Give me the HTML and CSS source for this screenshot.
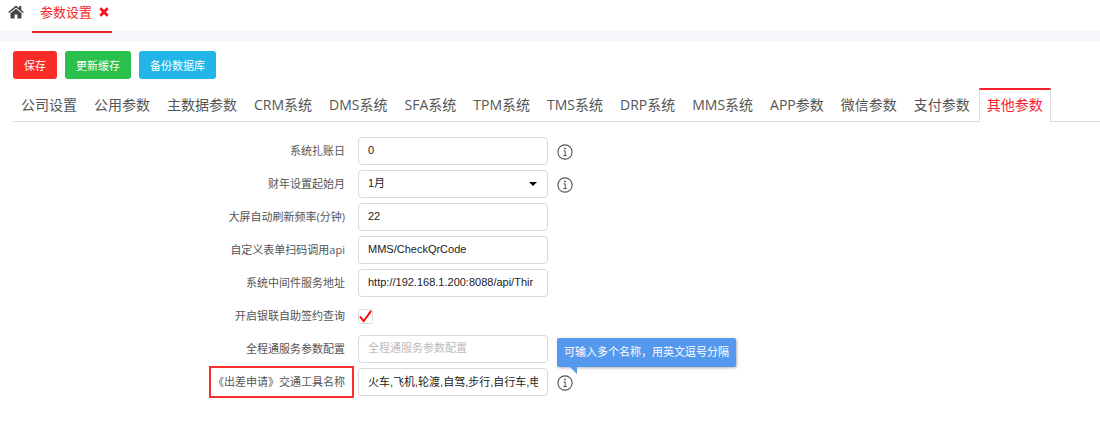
FILE: index.html
```html
<!DOCTYPE html>
<html lang="zh-CN">
<head>
    <meta charset="UTF-8">
    <meta name="viewport" content="width=device-width, initial-scale=1.0">
    <title>参数设置</title>
    <link rel="stylesheet" href="styles.css">
</head>
<body>
    <svg class="sprite" aria-hidden="true">
        <symbol id="icon-info" viewBox="0 0 16 16">
            <circle cx="8" cy="8" r="7.1" fill="none" stroke="currentColor" stroke-width="1.1"/>
            <circle cx="8" cy="4.5" r="0.9" fill="currentColor"/>
            <path d="M6.5 6.9h1.7v4.6M6.3 11.6h3.6" fill="none" stroke="currentColor" stroke-width="1"/>
        </symbol>
    </svg>

    <header class="page-tabs">
        <a href="#" class="home-link" aria-label="首页">
            <svg width="16" height="14" viewBox="0 0 16 14" fill="currentColor">
                <path d="M8 0.5L0.2 7l1 1.1L8 2.5l6.8 5.6 1-1.1-2.5-2.1V1.1h-2.2v2z"/>
                <path d="M8 3.7L2.5 8.2v5.3h4.1V9.4h2.8v4.1h4.1V8.2z"/>
            </svg>
        </a>
        <div class="page-tab">
            <a href="#">参数设置</a>
            <button type="button" class="close-btn" aria-label="关闭">
                <svg width="10" height="10" viewBox="0 0 10 10">
                    <path d="M1.3 1.3l7.4 7.4M8.7 1.3L1.3 8.7" stroke="currentColor" stroke-width="2.8"/>
                </svg>
            </button>
        </div>
    </header>

    <main class="content">
        <div class="toolbar">
            <button type="button" class="btn btn-save">保存</button>
            <button type="button" class="btn btn-refresh">更新缓存</button>
            <button type="button" class="btn btn-backup">备份数据库</button>
        </div>

        <nav class="tabs">
            <a href="#" class="tab">公司设置</a>
            <a href="#" class="tab">公用参数</a>
            <a href="#" class="tab">主数据参数</a>
            <a href="#" class="tab">CRM系统</a>
            <a href="#" class="tab">DMS系统</a>
            <a href="#" class="tab">SFA系统</a>
            <a href="#" class="tab">TPM系统</a>
            <a href="#" class="tab">TMS系统</a>
            <a href="#" class="tab">DRP系统</a>
            <a href="#" class="tab">MMS系统</a>
            <a href="#" class="tab">APP参数</a>
            <a href="#" class="tab">微信参数</a>
            <a href="#" class="tab">支付参数</a>
            <a href="#" class="tab active">其他参数</a>
        </nav>

        <form class="settings">
            <div class="row">
                <div class="label-cell"><label for="closingDay">系统扎账日</label></div>
                <input type="text" id="closingDay" class="control" value="0">
                <span class="info"><svg class="info-icon"><use href="#icon-info"/></svg></span>
            </div>
            <div class="row">
                <div class="label-cell"><label for="startMonth">财年设置起始月</label></div>
                <select id="startMonth" class="control">
                    <option>1月</option>
                </select>
                <span class="info"><svg class="info-icon"><use href="#icon-info"/></svg></span>
            </div>
            <div class="row">
                <div class="label-cell"><label for="refreshRate">大屏自动刷新频率(分钟)</label></div>
                <input type="text" id="refreshRate" class="control" value="22">
            </div>
            <div class="row">
                <div class="label-cell"><label for="scanApi">自定义表单扫码调用api</label></div>
                <input type="text" id="scanApi" class="control" value="MMS/CheckQrCode">
            </div>
            <div class="row">
                <div class="label-cell"><label for="serviceUrl">系统中间件服务地址</label></div>
                <input type="text" id="serviceUrl" class="control" value="http://192.168.1.200:8088/api/Thir">
            </div>
            <div class="row">
                <div class="label-cell"><label for="unionPay">开启银联自助签约查询</label></div>
                <span class="check">
                    <input type="checkbox" id="unionPay" checked>
                    <svg class="check-mark" viewBox="0 0 16 16">
                        <path d="M2 8l4 5L14 2" fill="none" stroke="currentColor" stroke-width="2"/>
                    </svg>
                </span>
            </div>
            <div class="row">
                <div class="label-cell"><label for="trackConfig">全程通服务参数配置</label></div>
                <input type="text" id="trackConfig" class="control" placeholder="全程通服务参数配置">
            </div>
            <div class="row">
                <div class="label-cell highlight"><label for="vehicles">《出差申请》交通工具名称</label></div>
                <input type="text" id="vehicles" class="control" value="火车,飞机,轮渡,自驾,步行,自行车,电动车">
                <span class="info">
                    <svg class="info-icon"><use href="#icon-info"/></svg>
                    <span class="tooltip" role="tooltip">可输入多个名称，用英文逗号分隔</span>
                </span>
            </div>
        </form>
    </main>
</body>
</html>
```
FILE: styles.css
```css
* {
    margin: 0;
    padding: 0;
    box-sizing: border-box;
}

body {
    font-family: "Open Sans", "Noto Sans CJK SC", sans-serif;
    font-size: 11px;
    color: #555;
    background: #fff;
}

a {
    color: inherit;
    text-decoration: none;
}

.sprite {
    position: absolute;
    width: 0;
    height: 0;
}

.page-tabs {
    display: flex;
    align-items: flex-start;
    height: 41px;
    padding-left: 8px;
    border-bottom: 10px solid #f4f6fa;
}

.home-link {
    margin: 5px 8px 0 0;
    color: #444;
}

.home-link svg,
.close-btn svg {
    display: block;
}

.page-tab {
    display: flex;
    align-items: center;
    gap: 7px;
    height: 33px;
    padding: 0 3px 8px 8px;
    border-bottom: 2px solid #e8262a;
    color: #f5222d;
    font-size: 13px;
}

.close-btn {
    border: none;
    background: none;
    color: #f5121d;
    cursor: pointer;
}

.content {
    padding: 10px 0 0 13px;
}

.toolbar {
    display: flex;
    gap: 8px;
}

.btn {
    height: 28px;
    padding: 0 11px;
    border: none;
    border-radius: 3px;
    color: #fff;
    font-family: inherit;
    font-size: 11px;
    cursor: pointer;
}

.btn-save {
    background: #f92c28;
}

.btn-refresh {
    background: #29c04b;
}

.btn-backup {
    background: #22b5e8;
}

.tabs {
    display: flex;
    gap: 1px;
    margin-top: 9px;
    border-bottom: 1px solid #ddd;
}

.tab {
    height: 34px;
    margin-bottom: -1px;
    padding: 0 7px;
    border: 1px solid transparent;
    border-top-width: 2px;
    border-bottom: none;
    font-size: 14px;
    line-height: 30px;
    white-space: nowrap;
}

.tab.active {
    background: #fff;
    border-color: #f5222d #ddd;
    color: #f5222d;
}

.settings {
    display: flex;
    flex-direction: column;
    gap: 5px;
    padding: 15px 0 20px;
}

.row {
    display: flex;
    align-items: center;
    height: 28px;
}

.label-cell {
    width: 345px;
    padding-right: 13px;
    text-align: right;
    line-height: 28px;
}

.label-cell.highlight {
    width: 145px;
    margin: 0 4px 0 196px;
    padding-right: 7px;
    border: 2px solid #f5302d;
    white-space: nowrap;
}

.control {
    width: 190px;
    height: 28px;
    padding: 0 9px 3px;
    border: 1px solid #d9d9d9;
    border-radius: 4px;
    background: #fff;
    color: #222;
    font-family: "Liberation Sans", "Noto Sans CJK SC", sans-serif;
    font-size: 11px;
}

.control::placeholder {
    color: #bbb;
}

select.control {
    appearance: none;
    background: #fff url("data:image/svg+xml,%3Csvg xmlns='http://www.w3.org/2000/svg' width='8' height='4'%3E%3Cpath d='M0 0h8L4 4z'/%3E%3C/svg%3E") no-repeat right 10px top 11px;
}

.info {
    position: relative;
    margin-left: 9px;
    padding-top: 2px;
}

.info-icon {
    display: block;
    width: 16px;
    height: 16px;
}

.check {
    position: relative;
    width: 15px;
    height: 15px;
}

.check input {
    display: block;
    appearance: none;
    width: 15px;
    height: 15px;
    border: 1px solid #ddd;
    border-radius: 2px;
}

.check-mark {
    position: absolute;
    top: 0;
    left: 0;
    width: 15px;
    height: 15px;
    color: #f00;
    visibility: hidden;
    pointer-events: none;
}

.check input:checked + .check-mark {
    visibility: visible;
}

.tooltip {
    position: absolute;
    bottom: 24px;
    left: 0;
    height: 29px;
    padding: 0 7px;
    border-radius: 2px;
    background: #5599ee;
    box-shadow: 1px 1px 3px rgba(0, 0, 0, 0.3);
    color: #fff;
    line-height: 28px;
    white-space: nowrap;
}

.tooltip::after {
    content: "";
    position: absolute;
    top: 28px;
    left: 12px;
    border-top: 8px solid #5599ee;
    border-left: 8px solid transparent;
}
```
